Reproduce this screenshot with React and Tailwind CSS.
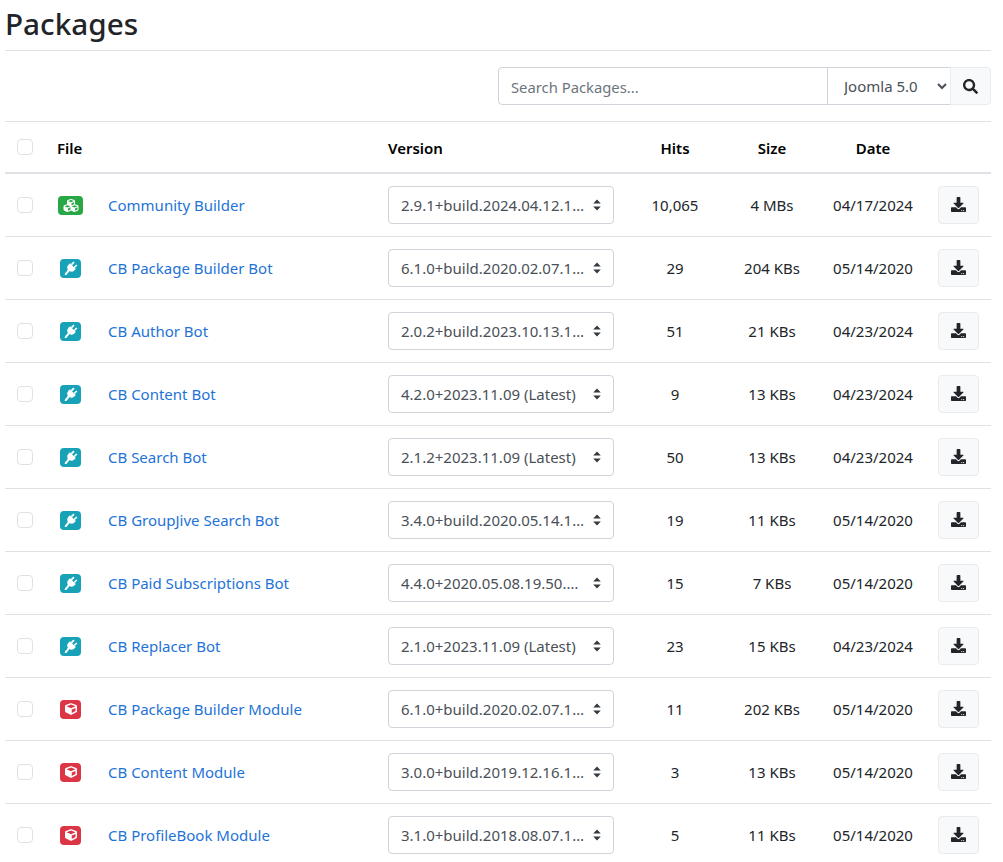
import React from "react";
import { FaCubes, FaCube, FaDownload, FaSearch } from "react-icons/fa";

const rows = [
  ["cubes", "Community Builder", "2.9.1+build.2024.04.12.17.54.14.2f0ac5a (Latest)", "10,065", "4 MBs", "04/17/2024"],
  ["plug", "CB Package Builder Bot", "6.1.0+build.2020.02.07.17.41.09.c1f0ac5 (Latest)", "29", "204 KBs", "05/14/2020"],
  ["plug", "CB Author Bot", "2.0.2+build.2023.10.13.14.12.33.a1b2c3d (Latest)", "51", "21 KBs", "04/23/2024"],
  ["plug", "CB Content Bot", "4.2.0+2023.11.09 (Latest)", "9", "13 KBs", "04/23/2024"],
  ["plug", "CB Search Bot", "2.1.2+2023.11.09 (Latest)", "50", "13 KBs", "04/23/2024"],
  ["plug", "CB GroupJive Search Bot", "3.4.0+build.2020.05.14.11.20.45.b2d3e4f (Latest)", "19", "11 KBs", "05/14/2020"],
  ["plug", "CB Paid Subscriptions Bot", "4.4.0+2020.05.08.19.50.21.c3d4e5f (Latest)", "15", "7 KBs", "05/14/2020"],
  ["plug", "CB Replacer Bot", "2.1.0+2023.11.09 (Latest)", "23", "15 KBs", "04/23/2024"],
  ["cube", "CB Package Builder Module", "6.1.0+build.2020.02.07.17.41.09.c1f0ac5 (Latest)", "11", "202 KBs", "05/14/2020"],
  ["cube", "CB Content Module", "3.0.0+build.2019.12.16.13.22.08.d4e5f6a (Latest)", "3", "13 KBs", "05/14/2020"],
  ["cube", "CB ProfileBook Module", "3.1.0+build.2018.08.07.10.15.27.e5f6a7b (Latest)", "5", "11 KBs", "05/14/2020"],
];

function Box() {
  return <input type="checkbox" className="block h-4 w-4 appearance-none rounded-[4px] border border-[#dee2e6] bg-white" />;
}

function PlugIcon() {
  return (
    <svg viewBox="0 0 16 16" className="h-[15px] w-[15px]" fill="currentColor">
      <g transform="rotate(45 8 8)">
        <rect x="5" y="0.5" width="1.8" height="4" rx="0.5" />
        <rect x="9.2" y="0.5" width="1.8" height="4" rx="0.5" />
        <path d="M3.6 4.4 H12.4 V6.6 a4.4 4.4 0 0 1 -3.4 4.3 V12.2 H7 V10.9 a4.4 4.4 0 0 1 -3.4 -4.3 Z" />
      </g>
      <path d="M5.6 9.6 L2.6 12.6 L1.6 15 L3.6 15 L6.8 11 Z" />
    </svg>
  );
}

function FileIcon({ kind }) {
  if (kind === "cubes") {
    return (
      <span className="ml-px mt-px flex h-[19px] w-[25px] items-center justify-center rounded-[4px] bg-[#28a745] text-white">
        <FaCubes className="h-[15px] w-[16px]" />
      </span>
    );
  }
  const bg = kind === "plug" ? "bg-[#17a2b8]" : "bg-[#dc3545]";
  return (
    <span className={`ml-[3px] mt-px flex h-[19px] w-[21px] items-center justify-center rounded-[4px] text-white ${bg}`}>
      {kind === "plug" ? <PlugIcon /> : <FaCube className="h-[12px] w-[12px]" />}
    </span>
  );
}

function Version({ value }) {
  return (
    <div className="relative w-[226px]">
      <select
        defaultValue={value}
        className="block h-[38px] w-full appearance-none truncate rounded-[4px] border border-[#ced4da] bg-white pl-3 pr-7 text-[#495057] outline-none"
      >
        <option>{value}</option>
      </select>
      <svg viewBox="0 0 8 12" className="pointer-events-none absolute right-[13px] top-[13px] h-3 w-2 fill-[#343a40]">
        <path d="M4 0.5 L7.8 4.6 H0.2 Z M4 11.5 L0.2 7.4 H7.8 Z" />
      </svg>
    </div>
  );
}

export default function App() {
  return (
    <div className="h-[862px] overflow-hidden bg-white pl-[5px] pr-3 text-[15px] leading-6 text-[#212529] [font-family:'Noto_Sans','Open_Sans',sans-serif]">
      <h1 className="h-[51px] border-b border-[#dee2e6] pt-[3px] text-[29.7px] font-medium leading-[42px]">Packages</h1>
      <div className="flex h-[71px] items-start justify-end border-b border-[#dee2e6] pt-[17px]">
        <div className="-mt-px flex h-[38px] w-[493px]">
          <input
            placeholder="Search Packages..."
            className="min-w-0 flex-1 rounded-l-[4px] border border-[#ced4da] bg-white px-3 pt-[2px] text-[14.8px] text-[#495057] outline-none placeholder:text-[#6c757d]"
          />
          <select className="-ml-px w-[124px] border border-[#ced4da] bg-white pl-3 text-[#495057] outline-none">
            <option>Joomla 5.0</option>
          </select>
          <button className="-ml-px flex w-[41px] items-center justify-center rounded-r-[4px] border border-[#e9ecef] bg-[#f8f9fa] text-[#212529]">
            <FaSearch className="h-[15px] w-[15px]" />
          </button>
        </div>
      </div>
      <table className="w-[986px] table-fixed border-collapse">
        <colgroup>
          <col className="w-[40px]" />
          <col className="w-[51px]" />
          <col className="w-[280px]" />
          <col className="w-[250px]" />
          <col className="w-[98px]" />
          <col className="w-[96px]" />
          <col className="w-[106px]" />
          <col className="w-[65px]" />
        </colgroup>
        <thead>
          <tr className="h-[51px] border-b-2 border-[#dee2e6] text-black">
            <th className="px-3 pt-[2px] align-middle"><div className="-mt-[3px]"><Box /></div></th>
            <th className="px-3 pt-[2px] text-left font-semibold" colSpan={2}>File</th>
            <th className="px-3 pt-[2px] text-left font-semibold">Version</th>
            <th className="px-3 pt-[2px] text-center font-semibold">Hits</th>
            <th className="px-3 pt-[2px] text-center font-semibold">Size</th>
            <th className="px-3 pt-[2px] text-center font-semibold">Date</th>
            <th className="px-3"></th>
          </tr>
        </thead>
        <tbody>
          {rows.map((r) => (
            <tr key={r[1]} className="h-[63px] border-b border-[#dee2e6] last:border-b-0">
              <td className="px-3 align-middle"><Box /></td>
              <td className="px-3 align-middle"><FileIcon kind={r[0]} /></td>
              <td className="px-3 align-middle"><a href="#" className="text-[#1e73d8]">{r[1]}</a></td>
              <td className="px-3 align-middle"><Version value={r[2]} /></td>
              <td className="px-3 text-center align-middle">{r[3]}</td>
              <td className="px-3 text-center align-middle">{r[4]}</td>
              <td className="px-3 text-center align-middle">{r[5]}</td>
              <td className="px-3 text-right align-middle">
                <button className="inline-flex h-[38px] w-[41px] items-center justify-center rounded-[4px] border border-[#e9ecef] bg-[#f8f9fa] text-[#212529]">
                  <FaDownload className="-mt-[1px] h-[15px] w-[15px]" />
                </button>
              </td>
            </tr>
          ))}
        </tbody>
      </table>
    </div>
  );
}
